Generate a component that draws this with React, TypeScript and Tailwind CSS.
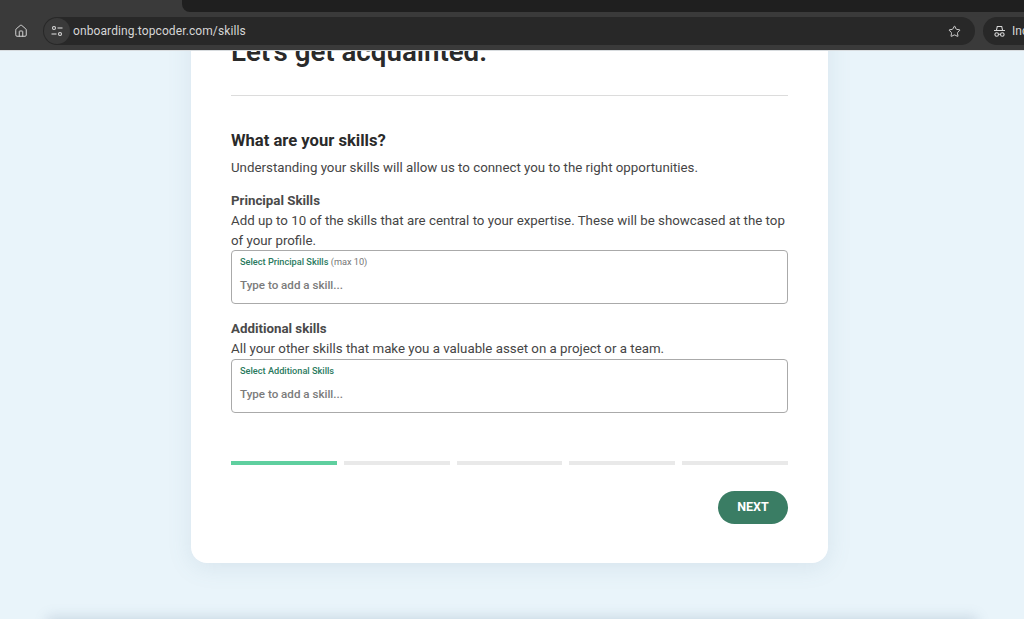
import React from 'react';
import { House, Star } from 'lucide-react';

const SkillField = ({ label, hint }: { label: string; hint?: string }) => (
  <div className="h-[54px] rounded-[4px] border border-[#aaaaaa] bg-white pl-2 pt-[4px]">
    <div className="text-[9.2px] leading-[14px] font-medium text-[#2a7a5e]">
      {label}
      {hint ? <span className="font-normal text-[#767676]"> {hint}</span> : null}
    </div>
    <div className="mt-[7px] text-[11.6px] leading-[18px] font-medium text-[#7b7b7b]">
      Type to add a skill...
    </div>
  </div>
);

const BrowserBar = () => (
  <header className="relative z-10 h-[51px] shrink-0 overflow-hidden border-b border-[#d8dcdf] bg-[#3a3a3a]">
    {/* Active tab strip */}
    <div className="ml-[182px] h-[12px] rounded-bl-[8px] bg-[#1f1f1f]"></div>
    <div className="mt-[5px] flex h-[28px] items-center">
      <House className="ml-[14px] h-[14px] w-[14px] text-[#d4d4d4]" strokeWidth={1.7} />
      <div className="ml-[15px] flex h-[28px] w-[932px] shrink-0 items-center rounded-full bg-[#282828]">
        <div className="ml-[1px] flex h-[26px] w-[26px] items-center justify-center rounded-full bg-[#3a3a3a]">
          <svg width="12" height="12" viewBox="0 0 12 12" fill="none" stroke="#d8d8d8" strokeWidth="1.1">
            <circle cx="3" cy="3" r="1.5" />
            <path d="M6.5 3H11.5" />
            <circle cx="9" cy="9" r="1.5" />
            <path d="M0.5 9H5.5" />
          </svg>
        </div>
        <span className="ml-[3px] text-[12px] tracking-[0.1px] text-[#d6d6d6]">onboarding.topcoder.com/skills</span>
        <Star className="ml-auto mr-[14px] h-[13px] w-[13px] text-[#d4d4d4]" strokeWidth={1.8} />
      </div>
      <div className="ml-[8px] flex h-[28px] flex-1 items-center overflow-hidden rounded-l-full bg-[#282828] pl-[10px]">
        <svg className="shrink-0" width="13" height="13" viewBox="0 0 13 13" fill="none" stroke="#d8d8d8" strokeWidth="1.1">
          <path d="M3.5 5 L4.3 1.5 H8.7 L9.5 5" />
          <path d="M1 5.5 H12" />
          <circle cx="3.7" cy="9.5" r="1.8" />
          <circle cx="9.3" cy="9.5" r="1.8" />
          <path d="M5.5 9.2 H7.5" />
        </svg>
        <span className="ml-[6px] text-[12px] text-[#d6d6d6]">Incognito</span>
      </div>
    </div>
  </header>
);

export default function App() {
  return (
    <div className="flex h-[619px] w-[1024px] flex-col overflow-hidden bg-[#e9f4fa] font-['Roboto',sans-serif]">
      <BrowserBar />
      <main className="min-h-0 flex-1 overflow-hidden">
        <section className="relative z-0 -mt-[40px] ml-[191px] h-[552px] w-[637px] rounded-[16px] bg-white px-[40px] shadow-[0_4px_24px_rgba(90,120,150,0.13)]">
          <h1 className="h-[84px] pt-[22px] text-[27.7px] leading-[38px] font-semibold text-[#2a2a2a]">
            Let's get acquainted.
          </h1>
          <hr className="border-t border-[#dcdcdc]" />

          <h2 className="mt-[34px] text-[16.6px] leading-[22px] font-bold text-[#2a2a2a]">What are your skills?</h2>
          <p className="mt-[5px] text-[13.3px] leading-[22px] text-[#454545]">
            Understanding your skills will allow us to connect you to the right opportunities.
          </p>

          <h3 className="mt-[12px] text-[13.3px] leading-[20px] font-bold text-[#4a4a4a]">Principal Skills</h3>
          <p className="text-[13.3px] leading-[20px] text-[#454545]">
            Add up to 10 of the skills that are central to your expertise. These will be showcased at the top of your profile.
          </p>
          <div className="-mt-px">
            <SkillField label="Select Principal Skills" hint="(max 10)" />
          </div>

          <h3 className="mt-[15px] text-[13.3px] leading-[20px] font-bold text-[#4a4a4a]">Additional skills</h3>
          <p className="text-[13.3px] leading-[20px] text-[#454545]">
            All your other skills that make you a valuable asset on a project or a team.
          </p>
          <SkillField label="Select Additional Skills" />

          {/* Step progress */}
          <div className="mt-[48px] flex gap-[7px]">
            <div className="h-[4px] flex-1 bg-[#5fcf9f]"></div>
            <div className="h-[4px] flex-1 bg-[#e9e9e9]"></div>
            <div className="h-[4px] flex-1 bg-[#e9e9e9]"></div>
            <div className="h-[4px] flex-1 bg-[#e9e9e9]"></div>
            <div className="h-[4px] flex-1 bg-[#e9e9e9]"></div>
          </div>

          <div className="mt-[26px] flex justify-end">
            <button className="h-[33px] w-[70px] rounded-full bg-[#3a7d64] text-[12.5px] font-bold text-white">NEXT</button>
          </div>
        </section>

        {/* Footer card edge just under the fold */}
        <div className="mx-auto mt-[56px] h-[40px] w-[930px] bg-white shadow-[0_-2px_12px_rgba(90,120,150,0.22)]"></div>
      </main>
    </div>
  );
}
